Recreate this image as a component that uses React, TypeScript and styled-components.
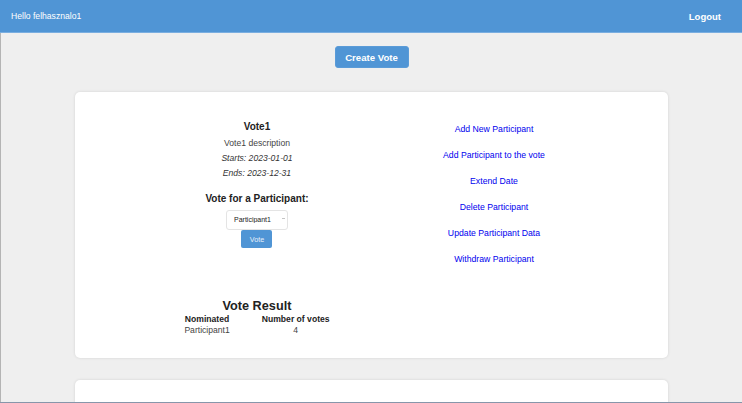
import React from "react";
import styled, { createGlobalStyle } from "styled-components";

const Global = createGlobalStyle`
  html, body { margin: 0; padding: 0; }
  body {
    background: #efefef;
    font-family: "Liberation Sans", Arial, sans-serif;
    color: #222;
  }
`;

const Header = styled.header`
  height: 32px;
  background: #5095d5;
  border-bottom: 1px solid #7aaee0;
  display: flex;
  align-items: center;
  justify-content: space-between;
  padding: 0 21px 0 11px;
  color: #fff;
`;

const Greeting = styled.span`
  font-size: 8.6px;
`;

const LogoutButton = styled.button`
  background: none;
  border: none;
  padding: 0;
  color: #fff;
  font-family: inherit;
  font-weight: bold;
  font-size: 9.5px;
  cursor: pointer;
`;

const Main = styled.main`
  display: flex;
  flex-direction: column;
  align-items: center;
  border-left: 1px solid #b4b4b4;
  padding-top: 13px;
  min-height: 400px;
`;

const CreateButton = styled.button`
  width: 74px;
  height: 22px;
  background: #5095d5;
  color: #fff;
  border: 1px solid #5a9bd8;
  border-radius: 3px;
  font-family: inherit;
  font-weight: bold;
  font-size: 9.6px;
  padding: 0;
  margin-bottom: 24px;
  cursor: pointer;
`;

const Card = styled.section<{ $minHeight?: number }>`
  width: 80%;
  box-sizing: border-box;
  background: #fff;
  border-radius: 5px;
  box-shadow: 0 0 3px rgba(0, 0, 0, 0.12);
  padding: 20px 16px 22px 24px;
  margin-bottom: 22px;
  min-height: ${(p) => (p.$minHeight ? `${p.$minHeight}px` : "auto")};
  display: grid;
  grid-template-columns: 237px 237px;
  justify-content: center;
`;

const LeftColumn = styled.div`
  display: flex;
  flex-direction: column;
  align-items: center;
  text-align: center;
`;

const Title = styled.div`
  font-weight: bold;
  font-size: 10px;
  line-height: 14px;
  margin-top: 8px;
  margin-bottom: 2px;
  color: #222;
`;

const Line = styled.div<{ $italic?: boolean }>`
  font-size: 8.6px;
  line-height: 15px;
  color: ${(p) => (p.$italic ? "#333" : "#444")};
  font-style: ${(p) => (p.$italic ? "italic" : "normal")};
`;

const VoteHeading = styled.div`
  font-weight: bold;
  font-size: 10px;
  line-height: 14px;
  margin-top: 11px;
  color: #222;
`;

const SelectWrap = styled.div`
  position: relative;
  margin-top: 2px;
  width: 62px;
  height: 20px;
`;

const Select = styled.select`
  appearance: none;
  width: 100%;
  height: 100%;
  box-sizing: border-box;
  background: #fff;
  border: 1px solid #e4e4e4;
  border-radius: 3px;
  font-family: inherit;
  font-size: 7px;
  color: #222;
  padding: 0 0 0 7px;
  outline: none;
`;

const Caret = styled.span`
  position: absolute;
  right: 3px;
  top: 10px;
  width: 3px;
  height: 1px;
  background: #c4c4c4;
  pointer-events: none;
`;

const SmallButton = styled.button`
  margin-top: 2px;
  width: 31px;
  height: 18px;
  background: #5095d5;
  color: #e8f1fb;
  border: none;
  border-radius: 2px;
  font-family: inherit;
  font-size: 7.2px;
  padding: 0;
  cursor: pointer;
`;

const RightColumn = styled.nav`
  display: flex;
  flex-direction: column;
  align-items: center;
  gap: 14px;
  padding-top: 11px;
`;

const ActionLink = styled.a`
  color: #0000ee;
  font-size: 8.7px;
  line-height: 12px;
  text-decoration: none;
  cursor: pointer;
`;

const Result = styled.div`
  grid-column: 1;
  display: flex;
  flex-direction: column;
  align-items: center;
  margin-top: 34px;
`;

const ResultTitle = styled.div`
  font-weight: bold;
  font-size: 12.7px;
  line-height: 15px;
  color: #222;
`;

const ResultTable = styled.div`
  display: grid;
  grid-template-columns: auto auto;
  column-gap: 32px;
  text-align: center;
`;

const Cell = styled.div<{ $head?: boolean }>`
  font-size: 8.6px;
  line-height: 11px;
  font-weight: ${(p) => (p.$head ? "bold" : "normal")};
  color: ${(p) => (p.$head ? "#222" : "#444")};
`;

const Frame = styled.div`
  position: fixed;
  left: 0;
  right: 0;
  bottom: 0;
  height: 1px;
  background: #8796aa;
  pointer-events: none;
`;

const actions = [
  "Add New Participant",
  "Add Participant to the vote",
  "Extend Date",
  "Delete Participant",
  "Update Participant Data",
  "Withdraw Participant",
];

export default function App() {
  return (
    <>
      <Global />
      <Header>
        <Greeting>Hello felhasznalo1</Greeting>
        <LogoutButton>Logout</LogoutButton>
      </Header>
      <Main>
        <CreateButton>Create Vote</CreateButton>
        <Card>
          <LeftColumn>
            <Title>Vote1</Title>
            <Line>Vote1 description</Line>
            <Line $italic>Starts: 2023-01-01</Line>
            <Line $italic>Ends: 2023-12-31</Line>
            <VoteHeading>Vote for a Participant:</VoteHeading>
            <SelectWrap>
              <Select defaultValue="Participant1">
                <option>Participant1</option>
              </Select>
              <Caret />
            </SelectWrap>
            <SmallButton>Vote</SmallButton>
          </LeftColumn>
          <RightColumn>
            {actions.map((a) => (
              <ActionLink key={a}>{a}</ActionLink>
            ))}
          </RightColumn>
          <Result>
            <ResultTitle>Vote Result</ResultTitle>
            <ResultTable>
              <Cell $head>Nominated</Cell>
              <Cell $head>Number of votes</Cell>
              <Cell>Participant1</Cell>
              <Cell>4</Cell>
            </ResultTable>
          </Result>
        </Card>
        <Card $minHeight={266} />
      </Main>
      <Frame />
    </>
  );
}
